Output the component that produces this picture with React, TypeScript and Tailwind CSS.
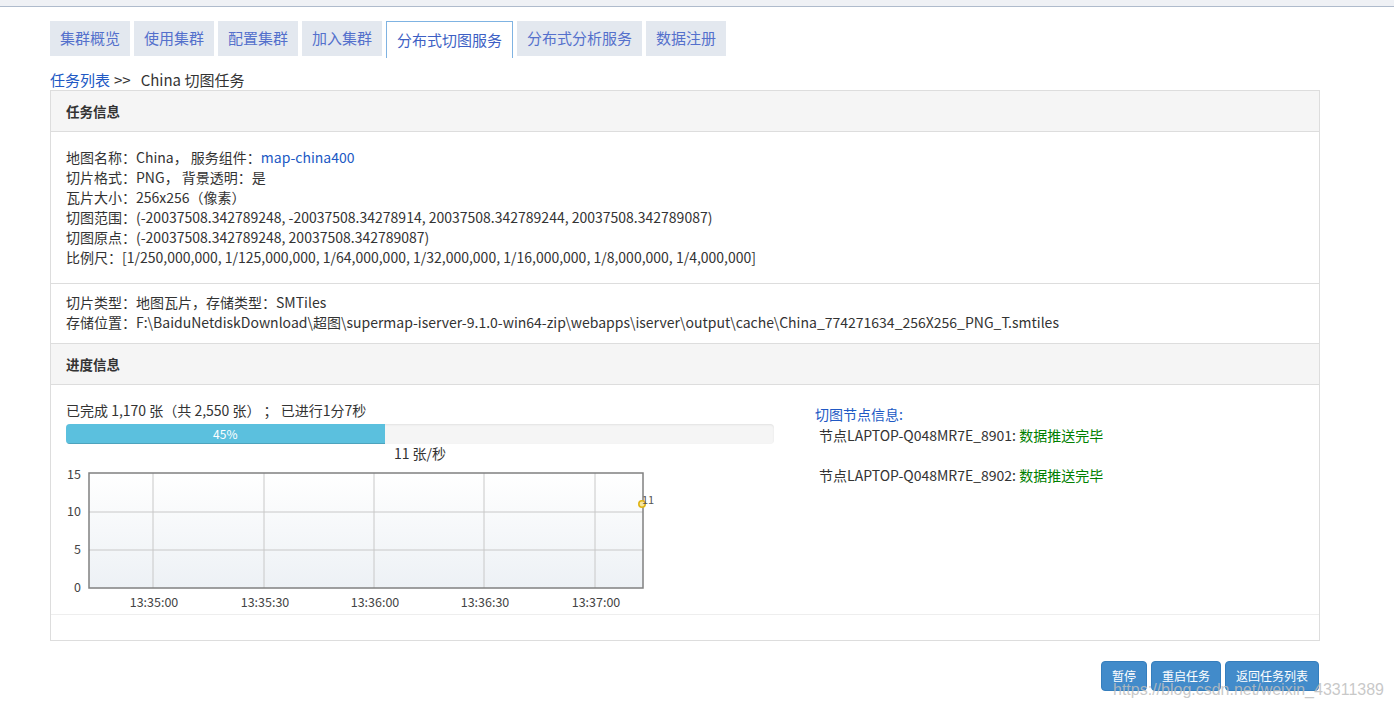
import React from "react";

const tabs = ["集群概览", "使用集群", "配置集群", "加入集群", "分布式切图服务", "分布式分析服务", "数据注册"];

function Chart() {
  const xs = [93, 204, 314, 424, 535];
  const xl = ["13:35:00", "13:35:30", "13:36:00", "13:36:30", "13:37:00"];
  return (
    <svg width="620" height="150" className="block">
      <defs>
        <linearGradient id="bgGrad" x1="0" y1="0" x2="0" y2="1">
          <stop offset="0%" stopColor="#ffffff" />
          <stop offset="100%" stopColor="#edf1f5" />
        </linearGradient>
      </defs>
      <rect x="29" y="9" width="554" height="115" fill="url(#bgGrad)" />
      {[48, 86].map((y) => (
        <line key={y} x1="29" x2="583" y1={y} y2={y} stroke="#c8c8c8" strokeWidth="1" />
      ))}
      {xs.map((x) => (
        <line key={x} x1={x} x2={x} y1="9" y2="124" stroke="#c8c8c8" strokeWidth="1" />
      ))}
      <rect x="29" y="9" width="554" height="115" fill="none" stroke="#808080" strokeWidth="1.5" />
      {[
        ["15", 11],
        ["10", 48],
        ["5", 86],
        ["0", 124],
      ].map(([t, y]) => (
        <text key={t as string} x="21" y={(y as number) + 4} textAnchor="end" fontSize="12.5" fill="#444" fontFamily="Noto Sans CJK SC, sans-serif">
          {t}
        </text>
      ))}
      {xs.map((x, i) => (
        <text key={i} x={x + 1} y="143" textAnchor="middle" fontSize="12.5" fill="#444" fontFamily="Noto Sans CJK SC, sans-serif">
          {xl[i]}
        </text>
      ))}
      <circle cx="582" cy="40" r="3.2" fill="#f5e6a0" stroke="#e0b416" strokeWidth="1.6" />
      <text x="582" y="40" fontSize="11" fill="#555" fontFamily="Noto Sans CJK SC, sans-serif">
        11
      </text>
    </svg>
  );
}

export default function App() {
  return (
    <div className="relative min-h-[708px] bg-white font-['Noto_Sans_CJK_SC',sans-serif] text-[#333]">
      <div className="h-[7px] bg-[#eff1f5] border-b border-[#afbbcc]" />
      <div className="pl-[50px] pr-[74px]">
        <div className="mt-[14px] flex items-end gap-[4px]">
          {tabs.map((t, i) =>
            i === 4 ? (
              <div key={t} className="h-[37px] -mb-[2px] px-[10px] flex items-center bg-white border border-b-0 border-[#7fb3e2] text-[15px] text-[#3d5fc4]">
                {t}
              </div>
            ) : (
              <div key={t} className="h-[35px] px-[10px] flex items-center bg-[#e3e8ef] text-[15px] text-[#5470cc]">
                {t}
              </div>
            )
          )}
        </div>
        <div className="mt-[14px] h-[20px] flex items-center text-[15px] leading-[20px]">
          <span className="text-[#2159c4]">任务列表</span>
          <span className="ml-[4px] whitespace-pre">{">>"}</span>
          <span className="ml-[10px] whitespace-pre">{"China 切图任务"}</span>
        </div>
        <div className="border border-[#dddddd] text-[14px]">
          <div className="h-[41px] bg-[#f5f5f5] border-b border-[#dddddd] flex items-center px-[15px] font-bold text-[13.5px]">
            任务信息
          </div>
          <div className="px-[15px] pt-[15px] pb-[16px] leading-[20px] border-b border-[#dddddd]">
            <div>
              地图名称：China， 服务组件：<span className="text-[#2159c4]">map-china400</span>
            </div>
            <div>切片格式：PNG， 背景透明：是</div>
            <div>瓦片大小：256x256（像素）</div>
            <div>切图范围：(-20037508.342789248, -20037508.34278914, 20037508.342789244, 20037508.342789087)</div>
            <div>切图原点：(-20037508.342789248, 20037508.342789087)</div>
            <div>比例尺：[1/250,000,000, 1/125,000,000, 1/64,000,000, 1/32,000,000, 1/16,000,000, 1/8,000,000, 1/4,000,000]</div>
          </div>
          <div className="px-[15px] pt-[8px] pb-[11px] leading-[20px] border-b border-[#dddddd]">
            <div>切片类型：地图瓦片，存储类型：SMTiles</div>
            <div>{"存储位置：F:\\BaiduNetdiskDownload\\超图\\supermap-iserver-9.1.0-win64-zip\\webapps\\iserver\\output\\cache\\China_774271634_256X256_PNG_T.smtiles"}</div>
          </div>
          <div className="h-[41px] bg-[#f5f5f5] border-b border-[#dddddd] flex items-center px-[15px] font-bold text-[13.5px]">
            进度信息
          </div>
          <div className="flex px-[15px] pt-[15px] border-b border-[#eeeeee]">
            <div className="w-[708px]">
              <div className="leading-[20px] whitespace-pre">已完成 1,170 张（共 2,550 张） ； 已进行1分7秒</div>
              <div className="mt-[4px] h-[20px] bg-[#f5f5f5] rounded-[4px] overflow-hidden flex shadow-[inset_0_1px_2px_rgba(0,0,0,0.08)]">
                <div className="w-[45%] h-full bg-[#5bc0de] text-white text-[12px] flex items-center justify-center shadow-[inset_0_-1px_0_rgba(0,0,0,0.15)]">
                  45%
                </div>
              </div>
              <div className="text-center leading-[18px] mt-0">11 张/秒</div>
              <div className="-ml-[6px] mt-[2px]">
                <Chart />
              </div>
            </div>
            <div className="ml-[41px] pt-[4px] leading-[20px]">
              <div className="text-[#2159c4]">切图节点信息:</div>
              <div className="ml-[4px] mt-[1px]">
                节点LAPTOP-Q048MR7E_8901: <span className="text-[#008000]">数据推送完毕</span>
              </div>
              <div className="ml-[4px] mt-[20px]">
                节点LAPTOP-Q048MR7E_8902: <span className="text-[#008000]">数据推送完毕</span>
              </div>
            </div>
          </div>
          <div className="h-[25px]" />
        </div>
        <div className="mt-[20px] flex justify-end gap-[4px] pr-[1px]">
          {["暂停", "重启任务", "返回任务列表"].map((b) => (
            <div key={b} className="h-[30px] px-[10px] flex items-center bg-[#428bca] border border-[#357ebd] rounded-[4px] text-white text-[12px]">
              {b}
            </div>
          ))}
        </div>
      </div>
      <div className="absolute left-[1113px] top-[680px] text-[16px] leading-[20px] font-['Liberation_Sans',sans-serif] text-[rgba(190,190,190,0.85)] pointer-events-none whitespace-nowrap">
        https://blog.csdn.net/weixin_43311389
      </div>
    </div>
  );
}
